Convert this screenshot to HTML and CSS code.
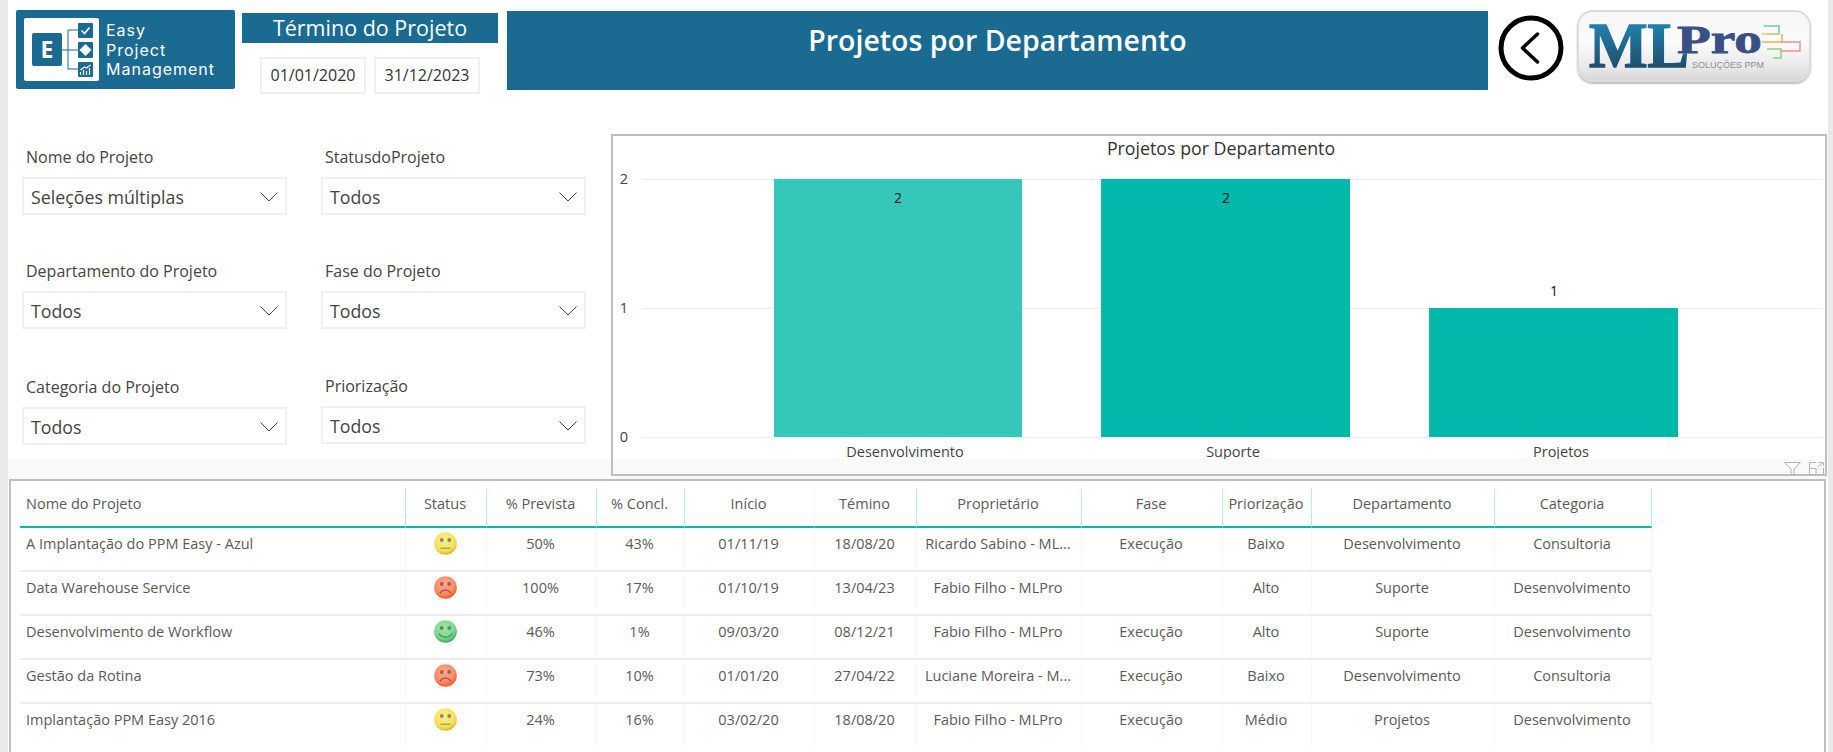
FILE: index.html
```html
<!DOCTYPE html>
<html lang="pt-BR">
<head>
    <meta charset="UTF-8">
    <meta name="viewport" content="width=device-width, initial-scale=1.0">
    <title>Projetos por Departamento</title>
    <link rel="stylesheet" href="styles.css">
</head>
<body>
    <svg class="defs" width="0" height="0">
        <defs>
            <radialGradient id="grad-yellow" cx="45%" cy="35%" r="65%">
                <stop offset="0" stop-color="#fbf08f"/>
                <stop offset="0.75" stop-color="#f3df5c"/>
                <stop offset="1" stop-color="#d2b62c"/>
            </radialGradient>
            <radialGradient id="grad-red" cx="45%" cy="35%" r="65%">
                <stop offset="0" stop-color="#fdab92"/>
                <stop offset="0.7" stop-color="#fa8a68"/>
                <stop offset="1" stop-color="#ec5a22"/>
            </radialGradient>
            <radialGradient id="grad-green" cx="45%" cy="35%" r="65%">
                <stop offset="0" stop-color="#a4e6a8"/>
                <stop offset="0.7" stop-color="#7fd68c"/>
                <stop offset="1" stop-color="#3da565"/>
            </radialGradient>
            <linearGradient id="grad-ml" gradientUnits="userSpaceOnUse" x1="0" y1="15" x2="0" y2="57">
                <stop offset="0" stop-color="#2180ad"/>
                <stop offset="1" stop-color="#1f4f6c"/>
            </linearGradient>
            <symbol id="face-neutral" viewBox="0 0 23 23">
                <circle cx="11.500" cy="11.500" r="11.300" fill="url(#grad-yellow)"/>
                <circle cx="7.800" cy="8" r="1.900" fill="#8f8a55"/>
                <circle cx="15.200" cy="8" r="1.900" fill="#8f8a55"/>
                <path d="M6.500 16.200h10" stroke="#a39a4e" stroke-width="1.200" fill="none"/>
            </symbol>
            <symbol id="face-sad" viewBox="0 0 23 23">
                <circle cx="11.500" cy="11.500" r="11.300" fill="url(#grad-red)"/>
                <circle cx="7.800" cy="8" r="1.900" fill="#a0614c"/>
                <circle cx="15.200" cy="8" r="1.900" fill="#a0614c"/>
                <path d="M6 17.500c2.500-4.500 8.500-4.500 11 0" stroke="#a8543a" stroke-width="1.300" fill="none"/>
            </symbol>
            <symbol id="face-happy" viewBox="0 0 23 23">
                <circle cx="11.500" cy="11.500" r="11.300" fill="url(#grad-green)"/>
                <circle cx="7.800" cy="8" r="1.900" fill="#4f8f62"/>
                <circle cx="15.200" cy="8" r="1.900" fill="#4f8f62"/>
                <path d="M5 13.500c2.500 5 10.500 5 13 0" stroke="#3f8f58" stroke-width="1.300" fill="none"/>
            </symbol>
            <symbol id="chevron" viewBox="0 0 18 10">
                <path d="M0.500 0.500L9 9L17.500 0.500" stroke="#444" stroke-width="1" fill="none"/>
            </symbol>
        </defs>
    </svg>

    <div class="page">
        <header class="top-row">
            <div class="easy-logo">
                <svg class="easy-mark" width="75" height="63" viewBox="0 0 75 63">
                    <rect width="75" height="63" rx="2" fill="#fff"/>
                    <rect x="8" y="15" width="30" height="33" rx="2" fill="#1b6a92"/>
                    <text x="23" y="40" class="easy-e" text-anchor="middle">E</text>
                    <path d="M38 32h16M44 12v39M44 12h10M44 51h10" stroke="#1b6a92" stroke-width="1" fill="none"/>
                    <rect x="54" y="5" width="15" height="15" rx="1" fill="#1b6a92"/>
                    <path d="M57.500 12.500l3 3l5-6" stroke="#fff" stroke-width="1.600" fill="none"/>
                    <rect x="54" y="24" width="15" height="16" rx="1" fill="#1b6a92"/>
                    <path d="M61.500 26l6 6l-6 6l-6-6z" fill="#fff"/>
                    <rect x="54" y="44" width="15" height="15" rx="1" fill="#1b6a92"/>
                    <path d="M56.500 57v-3M59.500 57v-5M62.500 57v-4M65.500 57v-7M56.500 52l4-3l2 1l4-3" stroke="#fff" stroke-width="1.200" fill="none"/>
                </svg>
                <div class="easy-name">
                    <span>Easy</span>
                    <span>Project</span>
                    <span>Management</span>
                </div>
            </div>

            <div class="term">
                <div class="term-title">Término do Projeto</div>
                <div class="term-dates">
                    <div class="date-box">01/01/2020</div>
                    <div class="date-box">31/12/2023</div>
                </div>
            </div>

            <div class="banner">
                <h1>Projetos por Departamento</h1>
            </div>

            <svg class="back" width="66" height="66" viewBox="0 0 66 66">
                <circle cx="33" cy="33" r="30" stroke="#000" stroke-width="5" fill="#fff"/>
                <path d="M39.500 19L24.500 33L39.500 47" stroke="#000" stroke-width="3.500" stroke-linecap="round" stroke-linejoin="round" fill="none"/>
            </svg>

            <div class="ml-logo">
                <svg width="234" height="72" viewBox="0 0 234 72">
                    <text x="12" y="57" class="ml-big" textLength="100" lengthAdjust="spacingAndGlyphs" fill="url(#grad-ml)" stroke="url(#grad-ml)">ML</text>
                    <text x="100" y="43" class="ml-pro" textLength="85" lengthAdjust="spacingAndGlyphs">Pro</text>
                    <text x="115" y="58" class="ml-sub" textLength="72" lengthAdjust="spacingAndGlyphs">SOLUÇÕES PPM</text>
                    <path d="M187 16h15v8h-12" stroke="#6fc4b8" stroke-width="1.500" fill="none"/>
                    <path d="M185 24h18" stroke="#e8c878" stroke-width="1.500" fill="none"/>
                    <path d="M205 24v8h-20" stroke="#f0b050" stroke-width="1.500" fill="none"/>
                    <path d="M204 32h19v9h-20" stroke="#f0908a" stroke-width="1.500" fill="none"/>
                    <path d="M190 39h14v9h-8" stroke="#8fcf80" stroke-width="1.500" fill="none"/>
                </svg>
            </div>
        </header>

        <section class="middle-row">
            <div class="filters">
                <div class="slicers">
                    <div class="slicer">
                        <div class="slicer-label">Nome do Projeto</div>
                        <div class="slicer-box">Seleções múltiplas <svg width="18" height="10"><use href="#chevron"/></svg></div>
                    </div>
                    <div class="slicer">
                        <div class="slicer-label">StatusdoProjeto</div>
                        <div class="slicer-box">Todos <svg width="18" height="10"><use href="#chevron"/></svg></div>
                    </div>
                    <div class="slicer">
                        <div class="slicer-label">Departamento do Projeto</div>
                        <div class="slicer-box">Todos <svg width="18" height="10"><use href="#chevron"/></svg></div>
                    </div>
                    <div class="slicer">
                        <div class="slicer-label">Fase do Projeto</div>
                        <div class="slicer-box">Todos <svg width="18" height="10"><use href="#chevron"/></svg></div>
                    </div>
                    <div class="slicer slicer-low">
                        <div class="slicer-label">Categoria do Projeto</div>
                        <div class="slicer-box">Todos <svg width="18" height="10"><use href="#chevron"/></svg></div>
                    </div>
                    <div class="slicer slicer-mid">
                        <div class="slicer-label">Priorização</div>
                        <div class="slicer-box">Todos <svg width="18" height="10"><use href="#chevron"/></svg></div>
                    </div>
                </div>
            </div>

            <div class="chart-panel">
                <!-- viewBox uses page coordinates, easier to compare with the screenshot -->
                <svg class="chart" width="1212" height="323" viewBox="613 136 1212 323">
                    <text x="1221" y="155" class="chart-title" text-anchor="middle">Projetos por Departamento</text>
                    <path d="M642 179.500H1823M642 308.500H1823M642 437.500H1823" stroke="#ececec" stroke-width="1"/>
                    <text x="624" y="184" class="axis" text-anchor="middle">2</text>
                    <text x="624" y="313" class="axis" text-anchor="middle">1</text>
                    <text x="624" y="442" class="axis" text-anchor="middle">0</text>
                    <rect x="774" y="179" width="248" height="258" fill="#36c7bb"/>
                    <rect x="1101" y="179" width="249" height="258" fill="#01b8aa"/>
                    <rect x="1429" y="308" width="249" height="129" fill="#01b8aa"/>
                    <text x="898" y="203" class="bar-value" text-anchor="middle">2</text>
                    <text x="1226" y="203" class="bar-value" text-anchor="middle">2</text>
                    <text x="1554" y="296" class="bar-value" text-anchor="middle">1</text>
                    <text x="905" y="457" class="axis" text-anchor="middle">Desenvolvimento</text>
                    <text x="1233" y="457" class="axis" text-anchor="middle">Suporte</text>
                    <text x="1561" y="457" class="axis" text-anchor="middle">Projetos</text>
                </svg>
                <div class="chart-foot">
                    <svg width="17" height="14" viewBox="0 0 17 14">
                        <path d="M0.500 0.500H16.500L10 7V13.500L7 11.500V7Z" stroke="#b4b4b4" fill="none"/>
                    </svg>
                    <svg width="15" height="13" viewBox="0 0 15 13">
                        <path d="M7 0.500H0.500V12.500H14.500V6M0.500 6.500H7V12.500M9 5L14 0.500M10 0.500H14.500V4" stroke="#b4b4b4" fill="none"/>
                    </svg>
                </div>
            </div>
        </section>

        <section class="table-panel">
            <table class="projects">
                <colgroup>
                    <col class="c-name"><col class="c-status"><col class="c-plan"><col class="c-done">
                    <col class="c-start"><col class="c-end"><col class="c-owner"><col class="c-phase">
                    <col class="c-prio"><col class="c-dept"><col class="c-cat">
                </colgroup>
                <thead>
                    <tr>
                        <th class="left">Nome do Projeto</th>
                        <th>Status</th>
                        <th>% Prevista</th>
                        <th>% Concl.</th>
                        <th class="no-line">Início</th>
                        <th>Témino</th>
                        <th>Proprietário</th>
                        <th>Fase</th>
                        <th>Priorização</th>
                        <th>Departamento</th>
                        <th>Categoria</th>
                    </tr>
                </thead>
                <tbody>
                    <tr>
                        <td class="left">A Implantação do PPM Easy - Azul</td>
                        <td><svg class="face"><use href="#face-neutral"/></svg></td>
                        <td>50%</td>
                        <td>43%</td>
                        <td class="no-line">01/11/19</td>
                        <td>18/08/20</td>
                        <td>Ricardo Sabino - ML...</td>
                        <td>Execução</td>
                        <td>Baixo</td>
                        <td>Desenvolvimento</td>
                        <td>Consultoria</td>
                    </tr>
                    <tr>
                        <td class="left">Data Warehouse Service</td>
                        <td><svg class="face"><use href="#face-sad"/></svg></td>
                        <td>100%</td>
                        <td>17%</td>
                        <td class="no-line">01/10/19</td>
                        <td>13/04/23</td>
                        <td>Fabio Filho - MLPro</td>
                        <td></td>
                        <td>Alto</td>
                        <td>Suporte</td>
                        <td>Desenvolvimento</td>
                    </tr>
                    <tr>
                        <td class="left">Desenvolvimento de Workflow</td>
                        <td><svg class="face"><use href="#face-happy"/></svg></td>
                        <td>46%</td>
                        <td>1%</td>
                        <td class="no-line">09/03/20</td>
                        <td>08/12/21</td>
                        <td>Fabio Filho - MLPro</td>
                        <td>Execução</td>
                        <td>Alto</td>
                        <td>Suporte</td>
                        <td>Desenvolvimento</td>
                    </tr>
                    <tr>
                        <td class="left">Gestão da Rotina</td>
                        <td><svg class="face"><use href="#face-sad"/></svg></td>
                        <td>73%</td>
                        <td>10%</td>
                        <td class="no-line">01/01/20</td>
                        <td>27/04/22</td>
                        <td>Luciane Moreira - M...</td>
                        <td>Execução</td>
                        <td>Baixo</td>
                        <td>Desenvolvimento</td>
                        <td>Consultoria</td>
                    </tr>
                    <tr class="last">
                        <td class="left">Implantação PPM Easy 2016</td>
                        <td><svg class="face"><use href="#face-neutral"/></svg></td>
                        <td>24%</td>
                        <td>16%</td>
                        <td class="no-line">03/02/20</td>
                        <td>18/08/20</td>
                        <td>Fabio Filho - MLPro</td>
                        <td>Execução</td>
                        <td>Médio</td>
                        <td>Projetos</td>
                        <td>Desenvolvimento</td>
                    </tr>
                </tbody>
            </table>
        </section>
    </div>
</body>
</html>
```
FILE: styles.css
```css
html, body {
    margin: 0;
    height: 100%;
    overflow: hidden;
}
body {
    font-family: "Open Sans", "Noto Sans", sans-serif;
    background: #fff;
    color: #444;
}
.defs {
    position: absolute;
}
.page {
    height: 752px;
    box-sizing: border-box;
    border-left: 8px solid #e9e9e9;
    border-right: 5px solid #e9e9e9;
    display: flex;
    flex-direction: column;
}

/* top row */
.top-row {
    height: 134px;
    flex: none;
    display: flex;
    align-items: flex-start;
}
.easy-logo {
    margin: 10px 0 0 8px;
    width: 219px;
    height: 79px;
    box-sizing: border-box;
    padding: 8px 0 0 8px;
    background: #1b6a92;
    border-radius: 2px;
    display: flex;
    gap: 7px;
}
.easy-e {
    font-family: "Open Sans", sans-serif;
    font-weight: 700;
    font-size: 23px;
    fill: #fff;
}
.easy-name {
    display: flex;
    flex-direction: column;
    padding-top: 3px;
    color: #fff;
    font-family: Inter, "Open Sans", sans-serif;
    font-size: 16px;
    letter-spacing: 1px;
    line-height: 19.500px;
}
.term {
    margin: 13px 0 0 7px;
    width: 256px;
}
.term-title {
    height: 30px;
    line-height: 29px;
    background: #1b6a92;
    color: #fff;
    font-size: 21.500px;
    text-align: center;
}
.term-dates {
    display: flex;
    margin: 14px 0 0 18px;
    gap: 8px;
}
.date-box {
    width: 106px;
    height: 37px;
    box-sizing: border-box;
    border: 2px solid #f0f0f0;
    color: #333;
    font-size: 16px;
    line-height: 33px;
    text-align: center;
}
.banner {
    margin: 11px 0 0 9px;
    width: 981px;
    height: 79px;
    background: #1b6a92;
    color: #fff;
    text-align: center;
}
.banner h1 {
    margin: 0;
    padding-top: 9px;
    font-size: 28.500px;
    line-height: 40px;
    font-weight: 600;
}
.back {
    margin: 15px 0 0 10px;
    flex: none;
}
.ml-logo {
    margin: 10px 0 0 13px;
    width: 234px;
    height: 72px;
    border-radius: 16px;
    background: linear-gradient(#f6f6f6, #fbfbfb 45%, #e8e8e8 80%, #d4d4d4);
    box-shadow: inset 0 0 0 2px #dcdcdc, 0 2px 2px #bdbdbd;
}
.ml-big {
    font-family: "Liberation Serif", serif;
    font-weight: 700;
    font-size: 63px;
    stroke-width: 1.500px;
}
.ml-pro {
    font-family: "Liberation Serif", serif;
    font-weight: 700;
    font-size: 39px;
    fill: #3a4f86;
    stroke: #3a4f86;
    stroke-width: 0.800px;
}
.ml-sub {
    font-family: "Liberation Sans", sans-serif;
    font-size: 9px;
    fill: #8a8f94;
}

/* filters + chart */
.middle-row {
    height: 345px;
    flex: none;
    display: flex;
    background: #f9f9f9;
}
.filters {
    width: 603px;
    flex: none;
}
.slicers {
    height: 325px;
    box-sizing: border-box;
    background: #fff;
    padding: 11px 0 0 14px;
    display: grid;
    grid-template-columns: 265px 265px;
    column-gap: 34px;
    row-gap: 44px;
    align-content: start;
}
.slicer-label {
    padding-left: 4px;
    height: 24px;
    margin-bottom: 8px;
    font-size: 16px;
    line-height: 24px;
    color: #444;
}
.slicer-box {
    height: 38px;
    box-sizing: border-box;
    border: 2px solid #f0f0f0;
    padding: 2px 7px 0 7px;
    display: flex;
    justify-content: space-between;
    align-items: center;
    font-size: 17.800px;
    color: #444;
}
.slicer-low {
    margin-top: 2px;
}
.slicer-mid {
    margin-top: 1px;
}
.chart-panel {
    width: 1216px;
    height: 342px;
    flex: none;
    box-sizing: border-box;
    border: 2px solid #bfbfbf;
    background: #f9f9f9;
}
.chart {
    display: block;
    background: #fff;
}
.chart text {
    font-family: "Open Sans", sans-serif;
}
.chart .chart-title {
    font-size: 17.800px;
    fill: #333;
}
.chart .axis {
    font-size: 14.500px;
    fill: #444;
}
.chart .bar-value {
    font-size: 14px;
    fill: #111;
}
.chart-foot {
    display: flex;
    justify-content: flex-end;
    align-items: flex-start;
    gap: 8px;
    padding: 3px 1px 0 0;
}

/* table */
.table-panel {
    flex: 1;
    margin-left: 1px;
    width: 1817px;
    box-sizing: border-box;
    border: 2px solid #bfbfbf;
    border-bottom: none;
    padding: 7px 0 0 9px;
}
.projects {
    table-layout: fixed;
    width: 1632px;
    border-collapse: separate;
    border-spacing: 0;
    font-size: 14.500px;
    color: #5a5a5a;
}
.c-name { width: 386px; }
.c-status { width: 81px; }
.c-plan { width: 110px; }
.c-done { width: 88px; }
.c-start { width: 130px; }
.c-end { width: 102px; }
.c-owner { width: 165px; }
.c-phase { width: 141px; }
.c-prio { width: 89px; }
.c-dept { width: 183px; }
.c-cat { width: 157px; }

.projects th {
    height: 40px;
    padding: 4px 2px 10px 0;
    box-sizing: border-box;
    font-weight: 400;
    line-height: 24px;
    text-align: center;
    vertical-align: top;
    white-space: nowrap;
    border-right: 1px solid #b8ebe7;
    border-bottom: 2px solid #01b8aa;
}
.projects th.no-line {
    border-right-color: #f6f6f6;
}
.projects td {
    height: 44px;
    box-sizing: border-box;
    padding: 4px 2px 0 0;
    line-height: 24px;
    text-align: center;
    vertical-align: top;
    white-space: nowrap;
    border-right: 1px solid #f6f7f7;
    border-bottom: 2px solid #ececec;
}
.projects .last td {
    border-bottom: none;
}
.projects .left {
    text-align: left;
    padding-left: 6px;
}
.face {
    display: block;
    width: 23px;
    height: 23px;
    margin: 0 auto;
}
```
